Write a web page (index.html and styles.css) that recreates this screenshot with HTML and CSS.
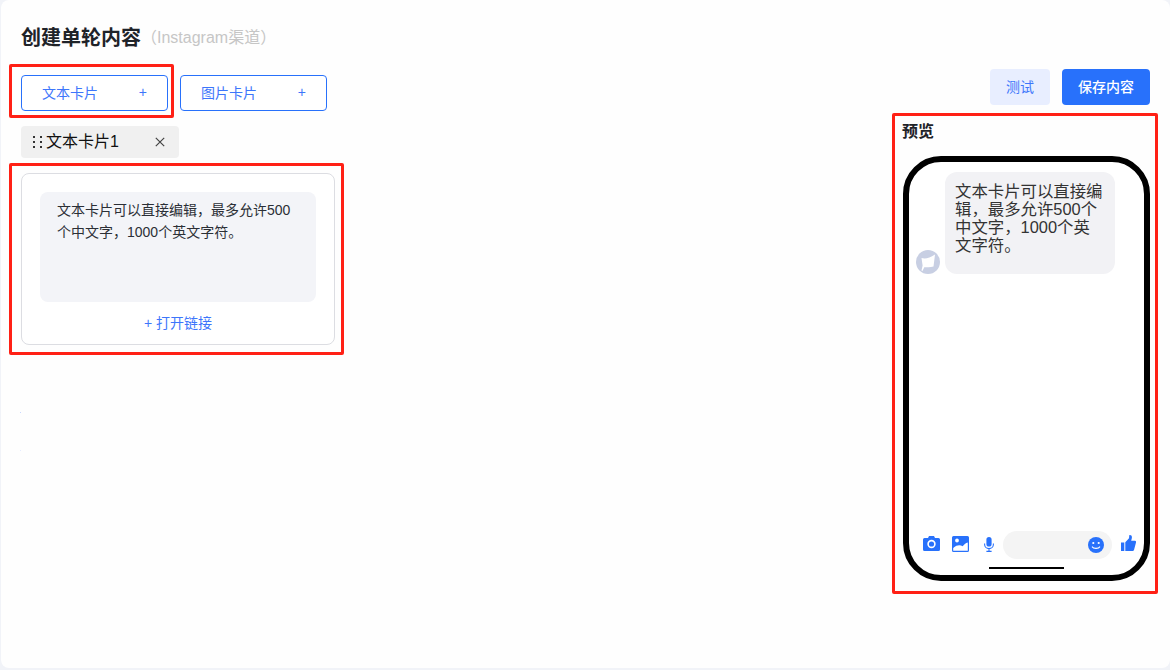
FILE: index.html
```html
<!DOCTYPE html>
<html lang="zh-CN">
<head>
  <meta charset="UTF-8" />
  <title>创建单轮内容</title>
  <link rel="stylesheet" href="styles.css">
</head>
<body>

<div class="page">
  <header class="page-head">
    <h1>创建单轮内容</h1>
    <span class="channel">（Instagram渠道）</span>
  </header>

  <div class="columns">
    <section class="editor">
      <div class="add-buttons">
        <button class="add-btn"><span>文本卡片</span><span>+</span></button>
        <button class="add-btn"><span>图片卡片</span><span>+</span></button>
      </div>

      <div class="tab">
        <span class="grip"><i></i><i></i><i></i><i></i><i></i><i></i></span>
        <span class="tab-name">文本卡片1</span>
        <svg class="tab-close" viewBox="0 0 10 10" width="10" height="10">
          <path d="M0.8 0.8L9.2 9.2M9.2 0.8L0.8 9.2" stroke="#444" stroke-width="1.2" fill="none" />
        </svg>
      </div>

      <div class="card">
        <div class="card-text">文本卡片可以直接编辑，最多允许500个中文字，1000个英文字符。</div>
        <a class="card-link">+ 打开链接</a>
      </div>

      <div class="speck"></div>
      <div class="speck speck-low"></div>
    </section>

    <aside class="preview">
      <div class="actions">
        <button class="btn-test">测试</button>
        <button class="btn-save">保存内容</button>
      </div>
      <h2>预览</h2>

      <div class="phone">
        <div class="message">
          <span class="avatar">
            <svg viewBox="0 0 24 24" width="24" height="24">
              <path d="M5.5 8C9.5 9.2 13.5 8 19 4.5L17.5 16.5C14 17.5 11 17 8.3 17.3L6.5 21L5.5 20.5L6.6 15.5Z" fill="#fff" />
            </svg>
          </span>
          <div class="bubble">文本卡片可以直接编辑，最多允许500个中文字，1000个英文字符。</div>
        </div>

        <div class="toolbar">
          <svg class="ico-camera" viewBox="0 0 17 15" width="17" height="15">
            <path fill-rule="evenodd" d="M1.5 2H5L6 0H11L12 2H15.5A1.5 1.5 0 0 1 17 3.5V13.5A1.5 1.5 0 0 1 15.5 15H1.5A1.5 1.5 0 0 1 0 13.5V3.5A1.5 1.5 0 0 1 1.5 2ZM8.5 3.8A4.2 4.2 0 1 0 8.5 12.2A4.2 4.2 0 1 0 8.5 3.8ZM8.5 5.4A2.6 2.6 0 1 1 8.5 10.6A2.6 2.6 0 1 1 8.5 5.4Z" />
          </svg>
          <svg class="ico-image" viewBox="0 0 17 16" width="17" height="16">
            <path fill-rule="evenodd" d="M1.5 0H15.5A1.5 1.5 0 0 1 17 1.5V14.5A1.5 1.5 0 0 1 15.5 16H1.5A1.5 1.5 0 0 1 0 14.5V1.5A1.5 1.5 0 0 1 1.5 0ZM5 2.6A1.9 1.9 0 1 0 5 6.4A1.9 1.9 0 1 0 5 2.6ZM1.2 14.8H15.8V6.5C13.5 7 12 9 10.5 10.2C8.5 9 5 8.5 1.2 12Z" />
          </svg>
          <svg class="ico-mic" viewBox="0 0 10 15" width="10" height="15">
            <path d="M5 0A2.6 2.6 0 0 1 7.6 2.6V7A2.6 2.6 0 0 1 2.4 7V2.6A2.6 2.6 0 0 1 5 0Z" />
            <path d="M0.6 6.6V7.2A4.4 4.4 0 0 0 9.4 7.2V6.6M5 11.6V14.4M2.4 14.4H7.6" fill="none" stroke="#2871fb" stroke-width="1.1" />
          </svg>
          <div class="input-pill">
            <svg class="ico-smile" viewBox="0 0 16 16" width="16" height="16">
              <circle cx="8" cy="8" r="8" />
              <circle cx="5.3" cy="6" r="1.1" fill="#fff" />
              <circle cx="10.7" cy="6" r="1.1" fill="#fff" />
              <path d="M4 9.6C5.5 12 10.5 12 12 9.6" fill="none" stroke="#fff" stroke-width="1.1" />
            </svg>
          </div>
          <svg class="ico-thumb" viewBox="0 0 15 16" width="15" height="16">
            <path d="M0 7.5H3.3V16H0ZM4.3 7.3L8 3.2L8.3 0.2C10 -0.2 11.3 1 10.8 3.2L10.2 5.8H14C14.8 5.8 15.2 6.6 15 7.4L13 15C12.8 15.6 12.3 16 11.6 16H4.3Z" />
          </svg>
        </div>
        <div class="home-bar"></div>
      </div>
    </aside>
  </div>

  <div class="mark mark-add"></div>
  <div class="mark mark-card"></div>
  <div class="mark mark-preview"></div>
</div>

</body>
</html>
```

FILE: styles.css
```css
* {
  box-sizing: border-box;
}
body {
  font-family: "Liberation Sans", "Noto Sans CJK SC", sans-serif;
  background: #f1f3f8;
  margin: 0;
  padding: 0;
  color: #1f2329;
}
button {
  font-family: inherit;
  cursor: pointer;
}
.page {
  position: relative;
  height: 668px;
  margin-left: 1px;
  padding: 0 20px;
  background: #fefefe;
  border-radius: 8px;
  overflow: hidden;
}
.page-head {
  display: flex;
  align-items: center;
  height: 69px;
  padding-top: 3px;
}
.page-head h1 {
  margin: 0;
  font-size: 20px;
  font-weight: 700;
}
.channel {
  font-size: 16px;
  color: #c6c6c6;
}
.columns {
  display: flex;
  justify-content: space-between;
}

/* left side */
.editor {
  width: 314px;
  padding-top: 6px;
}
.add-buttons {
  display: flex;
  gap: 12px;
}
.add-btn {
  display: flex;
  justify-content: space-between;
  align-items: center;
  width: 147px;
  height: 36px;
  padding: 0 20px 3px 20px;
  background: #fff;
  border: 1px solid #2871fb;
  border-radius: 4px;
  color: #3d76fb;
  font-size: 14px;
}
.tab {
  display: flex;
  align-items: center;
  width: 158px;
  height: 32px;
  margin-top: 15px;
  padding: 0 14px 0 12px;
  background: #f0f0f0;
  border-radius: 4px;
  color: #111;
  font-size: 16px;
}
.grip {
  display: grid;
  grid-template-columns: 2px 2px;
  gap: 3px 5px;
  margin-right: 4px;
}
.grip i {
  width: 2px;
  height: 2px;
  background: #333;
}
.tab-name {
  flex: 1;
  margin-top: -4px;
}
.card {
  display: flex;
  flex-direction: column;
  align-items: center;
  height: 172px;
  margin-top: 15px;
  padding: 18px 18px 0;
  background: #fff;
  border: 1px solid #dcdde2;
  border-radius: 8px;
}
.card-text {
  width: 100%;
  height: 110px;
  padding: 0 17px;
  padding-top: 7px;
  background: #f3f4f8;
  border-radius: 8px;
  font-size: 14px;
  line-height: 22px;
  color: #2b2f36;
}
.card-link {
  margin-top: 11px;
  font-size: 14px;
  line-height: 20px;
  color: #3d76fb;
}
.speck {
  width: 1px;
  height: 1px;
  margin-top: 67px;
  background: #c9d8ff;
  margin-left: -1px;
}
.speck-low {
  margin-top: 37px;
  background: #e6ecff;
}

/* right side */
.preview {
  width: 248px;
}
.actions {
  display: flex;
  justify-content: flex-end;
  gap: 12px;
}
.actions button {
  height: 36px;
  padding: 0 0 2px;
  border: none;
  border-radius: 4px;
  font-size: 14px;
}
.btn-test {
  width: 60px;
  background: #e8eeff;
  color: #3d76fb;
}
.btn-save {
  width: 88px;
  background: #2871fb;
  color: #fff;
  font-weight: 500;
}
.preview h2 {
  margin: 17px 0 14px;
  font-size: 16px;
  line-height: 20px;
  font-weight: 700;
}
.phone {
  display: flex;
  flex-direction: column;
  width: 247px;
  height: 425px;
  margin-left: 1px;
  padding: 10px 0 6px;
  border: 6px solid #000;
  border-radius: 38px;
  background: #fff;
}
.message {
  display: flex;
  align-items: flex-end;
  gap: 5px;
  padding-left: 7px;
}
.avatar {
  display: block;
  width: 24px;
  height: 24px;
  border-radius: 50%;
  background: #c8cfe3;
}
.avatar svg {
  display: block;
}
.bubble {
  width: 170px;
  height: 102px;
  padding: 10px 10px 0;
  background: #f2f2f5;
  border-radius: 12px;
  font-size: 16.4px;
  line-height: 18px;
  color: #333;
}
.toolbar {
  display: flex;
  align-items: center;
  margin-top: auto;
  padding-left: 14px;
}
.toolbar svg {
  display: block;
  flex-shrink: 0;
  fill: #2871fb;
}
.ico-camera {
  margin-bottom: 3px;
}
.ico-image {
  margin: 0 0 2px 12px;
}
.ico-mic {
  margin: 0 0 2px 15px;
}
.input-pill {
  display: flex;
  align-items: center;
  justify-content: flex-end;
  width: 109px;
  height: 28px;
  margin-left: 9px;
  padding-right: 8px;
  background: #f4f4f4;
  border-radius: 14px;
}
.ico-thumb {
  margin: 0 0 4px 9px;
}
.home-bar {
  align-self: center;
  width: 75px;
  height: 2px;
  margin-top: 8px;
  background: #000;
}

/* red annotation frames drawn over the screenshot */
.mark {
  position: absolute;
  border: 3px solid #ff2015;
  border-radius: 2px;
  pointer-events: none;
}
.mark-add {
  left: 8px;
  top: 64px;
  width: 165px;
  height: 54px;
}
.mark-card {
  left: 8px;
  top: 163px;
  width: 335px;
  height: 192px;
}
.mark-preview {
  left: 891px;
  top: 113px;
  width: 266px;
  height: 481px;
}
```
